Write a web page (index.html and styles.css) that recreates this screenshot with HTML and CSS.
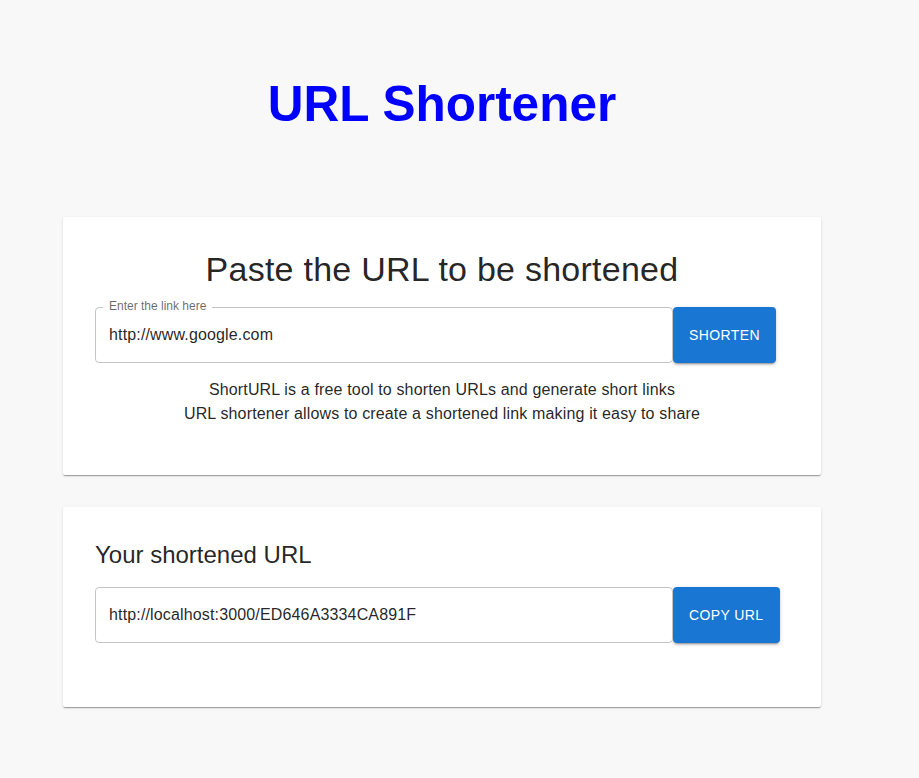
FILE: index.html
```html
<!DOCTYPE html>
<html lang="en">
<head>
<meta charset="utf-8">
<title>URL Shortener</title>
<link rel="stylesheet" href="styles.css">
</head>
<body>
<main class="page">
  <h1 class="title">URL Shortener</h1>

  <section class="card card-main">
    <h2 class="card-heading">Paste the URL to be shortened</h2>
    <div class="field-row">
      <div class="field">
        <span class="field-label">Enter the link here</span>
        <input class="field-input" type="text" value="http://www.google.com">
      </div>
      <button class="btn" type="button">Shorten</button>
    </div>
    <p class="desc">ShortURL is a free tool to shorten URLs and generate short links<br>URL shortener allows to create a shortened link making it easy to share</p>
  </section>

  <section class="card card-result">
    <h3 class="result-heading">Your shortened URL</h3>
    <div class="field-row">
      <div class="field">
        <input class="field-input" type="text" value="http://localhost:3000/ED646A3334CA891F">
      </div>
      <button class="btn" type="button">Copy URL</button>
    </div>
  </section>
</main>
</body>
</html>
```

FILE: styles.css
```css
* { box-sizing: border-box; }

html, body {
  margin: 0;
  padding: 0;
  background: #f8f8f8;
  font-family: "Liberation Sans", Arial, Helvetica, sans-serif;
  color: rgba(0, 0, 0, 0.87);
}

.page {
  width: 758px;
  margin-left: 63px;
  padding-top: 76px;
  padding-bottom: 60px;
  display: flex;
  flex-direction: column;
}

.title {
  margin: 0 0 85px;
  font-size: 49.5px;
  line-height: 56px;
  font-weight: 700;
  color: #0000ff;
  text-align: center;
}

.card {
  background: #ffffff;
  border-radius: 2px;
  box-shadow: 0 2px 1px -1px rgba(0,0,0,0.2), 0 1px 1px 0 rgba(0,0,0,0.14), 0 1px 3px 0 rgba(0,0,0,0.12);
  padding: 32px;
}

.card-main {
  padding-top: 31px;
  padding-bottom: 49px;
}

.card-result {
  margin-top: 32px;
  padding-bottom: 64px;
}

.card-heading {
  margin: 0;
  font-size: 34px;
  line-height: 42px;
  font-weight: 400;
  text-align: center;
  letter-spacing: 0.25px;
}

.result-heading {
  margin: 0;
  font-size: 24px;
  line-height: 32px;
  font-weight: 400;
}

.field-row {
  display: flex;
  align-items: stretch;
  margin-top: 17px;
}

.card-result .field-row {
  margin-top: 16px;
}

.field {
  position: relative;
  width: 578px;
  height: 56px;
  border: 1px solid #c4c4c4;
  border-radius: 4px;
  background: #fff;
}

.field-label {
  position: absolute;
  top: -8px;
  left: 7px;
  padding: 0 6px;
  background: #fff;
  font-size: 12px;
  line-height: 12px;
  color: rgba(0, 0, 0, 0.6);
}

.field-input {
  display: block;
  width: 100%;
  height: 100%;
  border: 0;
  outline: none;
  background: transparent;
  padding: 0 13px;
  font-family: "Liberation Sans", Arial, Helvetica, sans-serif;
  font-size: 16px;
  letter-spacing: 0.15px;
  color: rgba(0, 0, 0, 0.87);
}

.btn {
  display: flex;
  align-items: center;
  justify-content: center;
  height: 56px;
  padding: 0 16px;
  border: 0;
  border-radius: 4px;
  background: #1976d2;
  color: #fff;
  font-family: "Liberation Sans", Arial, Helvetica, sans-serif;
  font-size: 14px;
  letter-spacing: 0.4px;
  text-transform: uppercase;
  box-shadow: 0 3px 1px -2px rgba(0,0,0,0.2), 0 2px 2px 0 rgba(0,0,0,0.14), 0 1px 5px 0 rgba(0,0,0,0.12);
}

.desc {
  margin: 15px 0 0;
  font-size: 16px;
  line-height: 24px;
  letter-spacing: 0.15px;
  text-align: center;
  color: rgba(0, 0, 0, 0.87);
}
```
